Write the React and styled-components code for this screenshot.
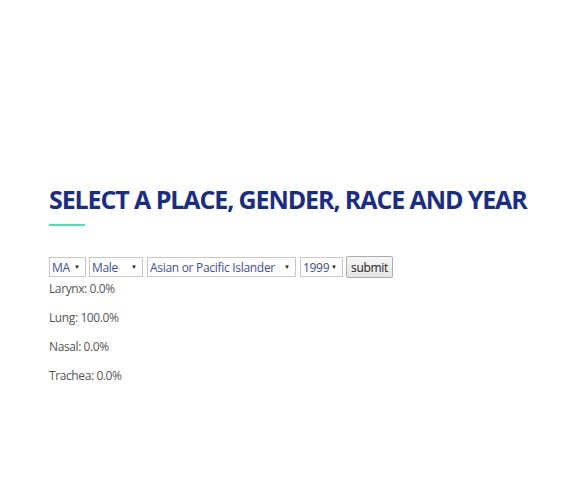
import React from "react";
import styled, { createGlobalStyle } from "styled-components";

const Global = createGlobalStyle`
  html, body { margin: 0; padding: 0; background: #fff; }
  body { font-family: "Open Sans", "Noto Sans", sans-serif; }
`;

const Page = styled.main`
  padding: 184px 0 0 49px;
`;

const Heading = styled.h1`
  margin: 0;
  font-family: "Open Sans", "Noto Sans", sans-serif;
  font-weight: 700;
  font-size: 25px;
  line-height: 31px;
  color: #1a2d85;
  letter-spacing: -1.1px;
`;

const Rule = styled.div`
  width: 36px;
  height: 2px;
  background: #50e0b0;
  margin-top: 9px;
`;

const Form = styled.form`
  display: flex;
  align-items: center;
  gap: 3px;
  margin-top: 30px;
`;

const SelectBox = styled.label`
  display: flex;
  align-items: center;
  box-sizing: border-box;
  width: ${(p) => p.$w}px;
  margin-right: ${(p) => p.$mr || 0}px;
  height: 20px;
  border: 1px solid #c8c8c8;
  background: #fff;
  padding: 0 5px 0 2px;
`;

const NativeSelect = styled.select`
  appearance: none;
  -webkit-appearance: none;
  border: none;
  background: transparent;
  outline: none;
  flex: 1;
  min-width: 0;
  padding: 0;
  font-family: "Open Sans", "Noto Sans", sans-serif;
  font-size: 12px;
  letter-spacing: -0.3px;
  color: #3c4f9c;
`;

const Arrow = styled.span`
  flex-shrink: 0;
  font-size: 6px;
  color: #222;
  line-height: 1;
`;

const Submit = styled.button`
  box-sizing: border-box;
  width: 47px;
  height: 22px;
  padding: 0;
  border: 1px solid #adadad;
  border-radius: 2px;
  background: linear-gradient(#f6f6f6, #e4e4e4);
  font-family: "Open Sans", "Noto Sans", sans-serif;
  font-size: 12px;
  letter-spacing: -0.3px;
  color: #222;
`;

const Results = styled.div`
  display: flex;
  flex-direction: column;
  gap: 12px;
  margin-top: 2px;
`;

const Line = styled.p`
  margin: 0;
  font-size: 12px;
  line-height: 17px;
  letter-spacing: -0.4px;
  color: #555;
`;

const selects = [
  { w: 37, mr: 0, value: "MA", options: ["MA"] },
  { w: 54, mr: 1, value: "Male", options: ["Male", "Female"] },
  { w: 149, mr: 1, value: "Asian or Pacific Islander", options: ["Asian or Pacific Islander"] },
  { w: 43, mr: 0, value: "1999", options: ["1999"] },
];

const results = [
  ["Larynx", "0.0%"],
  ["Lung", "100.0%"],
  ["Nasal", "0.0%"],
  ["Trachea", "0.0%"],
];

export default function App() {
  return (
    <>
      <Global />
      <Page>
        <Heading>SELECT A PLACE, GENDER, RACE AND YEAR</Heading>
        <Rule />
        <Form onSubmit={(e) => e.preventDefault()}>
          {selects.map((s, i) => (
            <SelectBox key={i} $w={s.w} $mr={s.mr}>
              <NativeSelect defaultValue={s.value}>
                {s.options.map((o) => (
                  <option key={o}>{o}</option>
                ))}
              </NativeSelect>
              <Arrow>▼</Arrow>
            </SelectBox>
          ))}
          <Submit type="submit">submit</Submit>
        </Form>
        <Results>
          {results.map(([k, v]) => (
            <Line key={k}>
              {k}: {v}
            </Line>
          ))}
        </Results>
      </Page>
    </>
  );
}
